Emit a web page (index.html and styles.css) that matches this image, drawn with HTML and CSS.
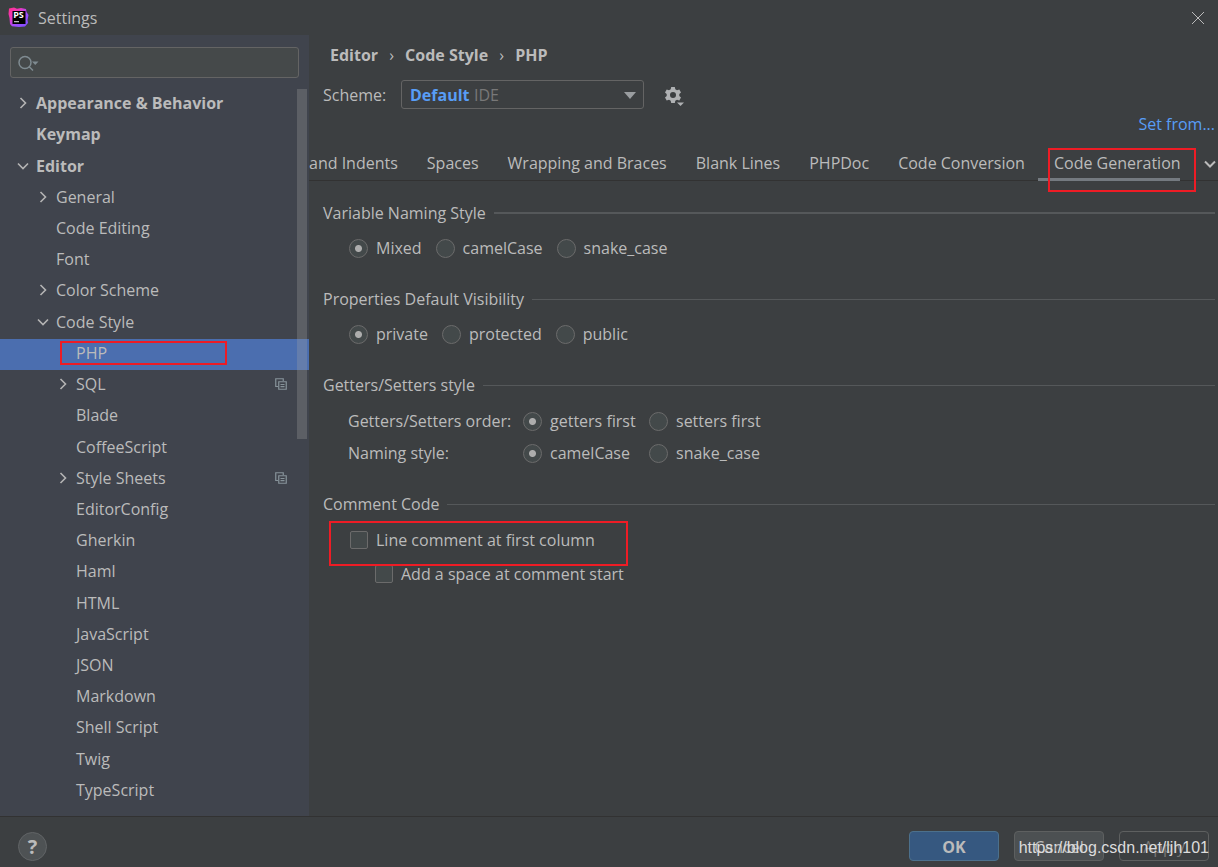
FILE: index.html
```html
<!DOCTYPE html>
<html lang="en">
<head>
<meta charset="utf-8">
<title>Settings</title>
<meta name="viewport" content="width=device-width, initial-scale=1">
<link rel="stylesheet" href="styles.css">
</head>
<body>
<svg class="defs" aria-hidden="true">
  <symbol id="chev-right" viewBox="0 0 12 12"><path d="M3.5 1 8.5 6 3.5 11"/></symbol>
  <symbol id="chev-down" viewBox="0 0 12 12"><path d="M1 3.5 6 8.5 11 3.5"/></symbol>
  <symbol id="copy" viewBox="0 0 12 12"><path d="M3 8.5H.75V.75h7.500V3M3.750 3.750h7.500v7.500H3.750zM5.500 6.500h4M5.500 8.700h4"/></symbol>
</svg>
<div class="window">
  <header class="titlebar">
    <svg class="logo" viewBox="0 0 21 21" aria-hidden="true">
      <defs><linearGradient id="lg" x1="0" y1="0" x2="1" y2="1"><stop offset="0" stop-color="#ff318c"/><stop offset=".3" stop-color="#f136b8"/><stop offset=".6" stop-color="#a14dff"/><stop offset="1" stop-color="#7a4dff"/></linearGradient></defs>
      <path fill="url(#lg)" d="M1 1.500 6 .5l3 1.200 4-.7 5 1 .5 3 2 3-1 5 .5 3-3 3.500-6 .5-7-.8L2 17 1.500 11 .5 7z"/>
      <path d="M4.500 4h13v13h-13z"/>
      <text class="logo-text" x="5.200" y="10.800">PS</text>
      <path fill="#bbb" d="M6 14h5v1.300H6z"/>
    </svg>
    <h1 class="title">Settings</h1>
    <button class="close" aria-label="Close"><svg viewBox="0 0 12 12"><path d="M0 0 12 12M12 0 0 12"/></svg></button>
  </header>

  <aside class="sidebar">
    <div class="search">
      <svg viewBox="0 0 22 16" aria-hidden="true"><circle cx="7" cy="7.500" r="6"/><path d="M11.200 11.700 15 15.500"/><path class="solid" d="M14 6.500h6.500l-3.250 3.500z"/></svg>
      <input type="text" aria-label="Search settings">
    </div>
    <nav class="tree-area">
      <ul class="tree">
        <li class="row top"><svg class="chev"><use href="#chev-right"/></svg><a href="#">Appearance &amp; Behavior</a></li>
        <li class="row top leaf"><a href="#">Keymap</a></li>
        <li class="row top"><svg class="chev"><use href="#chev-down"/></svg><a href="#">Editor</a></li>
        <li class="row mid"><svg class="chev"><use href="#chev-right"/></svg><a href="#">General</a></li>
        <li class="row mid leaf"><a href="#">Code Editing</a></li>
        <li class="row mid leaf"><a href="#">Font</a></li>
        <li class="row mid"><svg class="chev"><use href="#chev-right"/></svg><a href="#">Color Scheme</a></li>
        <li class="row mid"><svg class="chev"><use href="#chev-down"/></svg><a href="#">Code Style</a></li>
        <li class="row low leaf selected"><a href="#">PHP</a><span class="mark mark-php"></span></li>
        <li class="row low"><svg class="chev"><use href="#chev-right"/></svg><a href="#">SQL</a><svg class="copy"><use href="#copy"/></svg></li>
        <li class="row low leaf"><a href="#">Blade</a></li>
        <li class="row low leaf"><a href="#">CoffeeScript</a></li>
        <li class="row low"><svg class="chev"><use href="#chev-right"/></svg><a href="#">Style Sheets</a><svg class="copy"><use href="#copy"/></svg></li>
        <li class="row low leaf"><a href="#">EditorConfig</a></li>
        <li class="row low leaf"><a href="#">Gherkin</a></li>
        <li class="row low leaf"><a href="#">Haml</a></li>
        <li class="row low leaf"><a href="#">HTML</a></li>
        <li class="row low leaf"><a href="#">JavaScript</a></li>
        <li class="row low leaf"><a href="#">JSON</a></li>
        <li class="row low leaf"><a href="#">Markdown</a></li>
        <li class="row low leaf"><a href="#">Shell Script</a></li>
        <li class="row low leaf"><a href="#">Twig</a></li>
        <li class="row low leaf"><a href="#">TypeScript</a></li>
      </ul>
      <span class="thumb"></span>
    </nav>
  </aside>

  <main class="content">
    <nav class="crumbs" aria-label="Breadcrumb"><a href="#">Editor</a><span>›</span><a href="#">Code Style</a><span>›</span><a href="#">PHP</a></nav>
    <div class="scheme">
      <label for="scheme">Scheme:</label>
      <div class="combo">
        <select id="scheme"><option>Default</option></select>
        <span class="combo-note">IDE</span>
        <svg class="combo-arrow" viewBox="0 0 12 7" aria-hidden="true"><path d="M0 0h12L6 7z"/></svg>
      </div>
      <button class="gear" aria-label="Scheme actions">
        <svg viewBox="0 0 20 20"><path fill-rule="evenodd" d="M6.200 0h3.600l.5 2.300 1.700 1 2.300-.8 1.700 3-1.700 1.600v1.800l1.700 1.600-1.700 3-2.300-.8-1.700 1-.5 2.300H6.200l-.5-2.300-1.700-1-2.300.8-1.700-3 1.700-1.600V7.100L0 5.500l1.700-3 2.300.8 1.700-1zM8 5a3 3 0 1 0 0 6 3 3 0 0 0 0-6z"/><path class="gear-gap" d="M10.500 14H20v3l-4.500 3z"/><path d="M12 15.500h7L15.500 19z"/></svg>
      </button>
    </div>
    <div class="set-from"><a href="#">Set from...</a></div>

    <div class="tabbar">
      <div class="tabs" role="tablist">
        <button role="tab">and Indents</button>
        <button role="tab">Spaces</button>
        <button role="tab">Wrapping and Braces</button>
        <button role="tab">Blank Lines</button>
        <button role="tab">PHPDoc</button>
        <button role="tab">Code Conversion</button>
        <button role="tab" aria-selected="true">Code Generation</button>
      </div>
      <button class="more" aria-label="More tabs"><svg><use href="#chev-down"/></svg></button>
      <span class="mark mark-tab"></span>
    </div>

    <section class="group strong">
      <h2>Variable Naming Style</h2>
      <div class="options">
        <label><input type="radio" name="var" checked>Mixed</label>
        <label><input type="radio" name="var">camelCase</label>
        <label><input type="radio" name="var">snake_case</label>
      </div>
    </section>
    <section class="group">
      <h2>Properties Default Visibility</h2>
      <div class="options">
        <label><input type="radio" name="vis" checked>private</label>
        <label><input type="radio" name="vis">protected</label>
        <label><input type="radio" name="vis">public</label>
      </div>
    </section>
    <section class="group">
      <h2>Getters/Setters style</h2>
      <div class="pairs">
        <span>Getters/Setters order:</span>
        <label><input type="radio" name="order" checked>getters first</label>
        <label><input type="radio" name="order">setters first</label>
        <span>Naming style:</span>
        <label><input type="radio" name="naming" checked>camelCase</label>
        <label><input type="radio" name="naming">snake_case</label>
      </div>
    </section>
    <section class="group">
      <h2>Comment Code</h2>
      <div class="checks">
        <label><input type="checkbox">Line comment at first column</label>
        <label class="nested"><input type="checkbox">Add a space at comment start</label>
        <span class="mark mark-check"></span>
      </div>
    </section>
  </main>

  <footer class="footer">
    <button class="help" aria-label="Help">?</button>
    <button class="btn primary">OK</button>
    <button class="btn">Cancel</button>
    <button class="btn disabled" disabled>Apply</button>
    <span class="watermark">https://blog.csdn.net/ljh101</span>
  </footer>
</div>
</body>
</html>
```
FILE: styles.css
```css
* { box-sizing: border-box; }
body {
  margin: 0;
  background: #3c3f41;
  color: #bbbbbb;
  font: 16px/24px "Open Sans", "Noto Sans", sans-serif;
}
button, input, select { font: inherit; color: inherit; }
button { background: none; border: 0; padding: 0; }
a { color: inherit; text-decoration: none; }
h1, h2 { margin: 0; font-size: inherit; font-weight: 400; }
.defs { position: absolute; width: 0; height: 0; }

.window {
  display: grid;
  grid-template-columns: 309px minmax(0, 1fr);
  grid-template-rows: 35px 1fr auto;
  min-height: 100vh;
}

/* Title bar */
.titlebar {
  grid-column: 1 / -1;
  display: flex;
  align-items: center;
  padding: 0 14px 0 8px;
}
.logo { width: 21px; height: 21px; }
.logo-text { font: 700 9px "Open Sans", sans-serif; fill: #fff; }
.title { margin-left: 9px; }
.close { margin-left: auto; display: flex; }
.close svg { width: 12px; height: 12px; overflow: visible; stroke: #bbb; fill: none; }

/* Sidebar */
.sidebar {
  background: #40444d;
  display: flex;
  flex-direction: column;
  padding-top: 12px;
}
.search {
  display: flex;
  align-items: center;
  height: 31px;
  margin: 0 10px 11px;
  padding: 0 7px;
  background: #45494a;
  border: 1px solid #646464;
  border-radius: 3px;
}
.search svg { width: 22px; height: 16px; overflow: visible; fill: none; stroke: #7f8b91; stroke-width: 1.5; }
.search .solid { fill: #7f8b91; stroke: none; }
.search input { flex: 1; min-width: 0; background: none; border: 0; outline: 0; }

.tree-area { position: relative; flex: 1; display: flex; }
.tree {
  flex: 1;
  display: flex;
  flex-direction: column;
  list-style: none;
  margin: 0;
  padding: 0 0 9px;
}
.row { position: relative; flex: 1 0 31px; display: flex; align-items: center; padding: 0 22px 3px 0; }
.top { padding-left: 17px; font-weight: 700; }
.mid { padding-left: 37px; }
.low { padding-left: 57px; }
.top.leaf { padding-left: 36px; }
.mid.leaf { padding-left: 56px; }
.low.leaf { padding-left: 76px; }
.selected { background: #4b6eaf; }
.chev { width: 12px; height: 12px; margin-right: 7px; fill: none; stroke: #b4b4b4; stroke-width: 1.6; }
.copy { width: 12px; height: 12px; margin-left: auto; fill: none; stroke: #87939a; stroke-width: 1.2; }
.thumb {
  position: absolute;
  top: 0;
  right: 2px;
  width: 10px;
  height: 350px;
  background: rgba(166, 166, 166, .28);
}

/* Highlight frames over other content */
.mark { position: absolute; border: 2px solid #ee1c25; pointer-events: none; }
.mark-php { left: 60px; top: 2px; width: 167px; height: 24px; }
.mark-tab { right: 22px; top: 0; width: 148px; height: 44px; }
.mark-check { left: 6px; top: -7px; width: 299px; height: 45px; }

/* Content */
.content { display: flex; flex-direction: column; padding-top: 8px; }
.crumbs { display: flex; padding-left: 21px; font-weight: 700; }
.crumbs span { width: 27px; text-align: center; font-weight: 400; }
.scheme { display: flex; align-items: center; margin-top: 13px; padding-left: 14px; }
.scheme label { width: 78px; }
.combo { position: relative; width: 243px; }
.combo select {
  display: block;
  width: 100%;
  height: 29px;
  padding: 0 8px;
  appearance: none;
  background: #3c3f41;
  border: 1px solid #646464;
  border-radius: 3px;
  color: #589df6;
  font-weight: 700;
}
.combo-note { position: absolute; left: 73px; top: 3px; color: #787878; pointer-events: none; }
.combo-arrow { position: absolute; right: 8px; top: 12px; width: 12px; height: 7px; fill: #9a9da0; pointer-events: none; }
.gear { margin-left: 21px; padding-top: 4px; display: flex; }
.gear svg { width: 20px; height: 20px; fill: #afb1b3; }
.gear .gear-gap { fill: #3c3f41; }
.set-from { text-align: right; padding-right: 3px; margin-top: 3px; color: #589df6; }

.tabbar {
  position: relative;
  display: flex;
  margin-top: 12px;
  height: 33px;
  border-bottom: 1px solid #323232;
}
.tabs { flex: 1; display: flex; min-width: 0; overflow: hidden; height: 33px; }
.tabs button { flex: none; padding: 0 13px 0 16px; border-bottom: 3px solid transparent; white-space: nowrap; }
.tabs button:first-child { padding-left: 0; }
.tabs button:last-child { padding-right: 3px; }
.tabs [aria-selected] { border-color: #747a80; }
.more { width: 38px; padding-left: 24px; display: flex; align-items: center; }
.more svg { width: 12px; height: 12px; fill: none; stroke: #bbb; stroke-width: 2; }

.group { padding: 0 3px 0 14px; margin-top: 27px; }
.strong { margin-top: 20px; }
.group h2 { display: flex; align-items: center; gap: 8px; }
.group h2::after { content: ""; flex: 1; height: 1px; background: #55585a; }
.strong h2::after { height: 2px; }
.group label { display: flex; align-items: center; gap: 8px; white-space: nowrap; }
.options { display: flex; gap: 14px; padding-left: 26px; margin-top: 11px; }
.pairs {
  display: grid;
  grid-template-columns: 175px 126px auto;
  justify-content: start;
  row-gap: 8px;
  padding-left: 25px;
  margin-top: 12px;
}
.checks { position: relative; display: grid; gap: 10px; margin-top: 12px; padding-left: 27px; }
.checks .nested { padding-left: 25px; }
input[type="radio"], input[type="checkbox"] {
  appearance: none;
  flex: none;
  margin: 0;
  width: 19px;
  height: 19px;
  background: #43494a;
  border: 1px solid #6b6b6b;
  border-radius: 50%;
}
input[type="checkbox"] { width: 18px; height: 18px; border-radius: 2px; }
input[type="radio"]:checked { background: radial-gradient(circle, #adadad 3px, #43494a 4px); }

/* Footer */
.footer {
  grid-column: 1 / -1;
  position: relative;
  display: flex;
  align-items: center;
  gap: 15px;
  padding: 14px 9px 6px 18px;
  border-top: 1px solid #323232;
}
.help {
  width: 29px;
  height: 29px;
  margin-right: auto;
  background: #4e5254;
  border: 1px solid #616466;
  border-radius: 50%;
  font-size: 20px;
  font-weight: 700;
  line-height: 27px;
}
.btn { width: 90px; height: 30px; padding-top: 1px; background: #4c5052; border: 1px solid #5e6060; border-radius: 4px; }
.primary { background: #365880; border-color: #4c708c; font-weight: 700; }
.disabled { background: none; color: #777777; }
.watermark {
  position: absolute;
  right: 9px;
  top: 19px;
  color: #dcdcdc;
  font: 16px/24px "Liberation Sans", sans-serif;
  pointer-events: none;
}
```
